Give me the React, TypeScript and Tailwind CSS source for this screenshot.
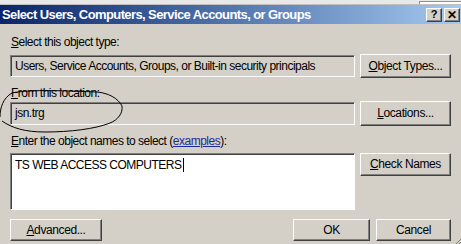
import React from "react";

// ─── 공통 스타일 ─────────────────────────────────────────────
const FONT = { fontFamily: '"Liberation Sans", Arial, sans-serif' };

/** 돌출된 Win2000 스타일 버튼 */
function Win2kButton({
  children,
  className = "",
}: {
  children: React.ReactNode;
  className?: string;
}) {
  return (
    <div
      className={`flex items-center justify-center border border-t-white border-l-white border-r-[#404040] border-b-[#404040] bg-[#d4d0c8] text-[12px] tracking-[-0.4px] text-black shadow-[inset_-1px_-1px_#808080] ${className}`}
    >
      {children}
    </div>
  );
}

/** 밑줄 단축키 */
const U = ({ c }: { c: string }) => <span className="underline">{c}</span>;

export default function App() {
  return (
    <div
      className="relative h-[244px] w-[461px] overflow-hidden bg-[#d4d0c8]"
      style={FONT}
    >
      {/* 뒤 창 조각 */}
      <div className="flex h-[5px] border-b border-[#c0c0c0] bg-[#e8e8e8]">
        <div className="ml-auto mt-[1px] w-[42px] border-l border-t border-[#909090] bg-white" />
      </div>

      {/* 타이틀 바 */}
      <div className="flex h-[19px] items-center bg-gradient-to-r from-[#0a246a] to-[#a6caf0] pl-[2px] pr-[1px]">
        <span className="text-[13px] font-bold tracking-[-0.6px] text-white">
          Select Users, Computers, Service Accounts, or Groups
        </span>
        <div className="ml-auto flex gap-[2px]">
          <Win2kButton className="h-[14px] w-[16px] !text-[11px] font-bold leading-none">
            ?
          </Win2kButton>
          <Win2kButton className="h-[14px] w-[16px] !text-[12px] font-bold leading-none">
            ✕
          </Win2kButton>
        </div>
      </div>

      {/* 본문 */}
      <div className="flex flex-col px-[10px] text-[12px] leading-[13px] tracking-[-0.5px] text-black">
        <div className="ml-[1px] mt-[12px]">
          <U c="S" />
          elect this object type:
        </div>
        <div className="mt-[5px] flex items-center">
          <div className="flex h-[22px] w-[345px] items-center border border-t-[#808080] border-l-[#808080] border-b-white border-r-white pl-[4px] shadow-[inset_1px_1px_#404040]">
            Users, Service Accounts, Groups, or Built-in security principals
          </div>
          <Win2kButton className="ml-auto h-[24px] w-[91px]">
            <U c="O" />
            bject Types...
          </Win2kButton>
        </div>

        <div className="ml-[1px] mt-[9px]">
          <U c="F" />
          rom this location:
        </div>
        <div className="mt-[1px] flex items-center">
          <div className="flex h-[23px] w-[345px] items-center border border-t-[#808080] border-l-[#808080] border-b-white border-r-white pl-[4px] shadow-[inset_1px_1px_#404040]">
            jsn.trg
          </div>
          <Win2kButton className="ml-auto h-[25px] w-[91px]">
            <U c="L" />
            ocations...
          </Win2kButton>
        </div>

        <div className="ml-[1px] mt-[9px]">
          <U c="E" />
          nter the object names to select (
          <span className="text-[#1f2a9c] underline">examples</span>):
        </div>
        <div className="mt-[5px] flex items-start">
          <div className="h-[57px] w-[345px] border border-t-[#808080] border-l-[#808080] border-b-white border-r-white bg-white pl-[4px] pt-[4px] shadow-[inset_1px_1px_#404040]">
            <span className="inline-flex items-center">
              TS WEB ACCESS COMPUTERS
              <span className="ml-[1px] inline-block h-[14px] w-[1px] bg-black" />
            </span>
          </div>
          <Win2kButton className="ml-auto h-[23px] w-[91px]">
            <U c="C" />
            heck Names
          </Win2kButton>
        </div>

        <div className="mt-[9px] flex items-center">
          <Win2kButton className="h-[22px] w-[92px]">
            <U c="A" />
            dvanced...
          </Win2kButton>
          <Win2kButton className="ml-auto h-[22px] w-[77px]">OK</Win2kButton>
          <Win2kButton className="ml-[6px] h-[22px] w-[75px]">Cancel</Win2kButton>
        </div>
      </div>

      {/* 손으로 그린 타원 표시 */}
      <svg
        className="pointer-events-none absolute left-0 top-0"
        width="461"
        height="244"
        fill="none"
        stroke="black"
        strokeWidth="1"
      >
        <path d="M 0 117 C 0 108, 3 98, 12 93 C 30 89, 70 91, 97 92 C 108 93, 118 98, 122 106 C 123 113, 118 120, 110 123 C 95 129, 70 132, 45 132 C 25 132, 12 128, 2 121" />
      </svg>

      {/* 크기 조절 그립 */}
      <svg className="absolute bottom-0 right-0" width="6" height="5" stroke="#808080">
        <line x1="6" y1="0" x2="1" y2="5" />
        <line x1="6" y1="3" x2="4" y2="5" />
      </svg>
    </div>
  );
}
